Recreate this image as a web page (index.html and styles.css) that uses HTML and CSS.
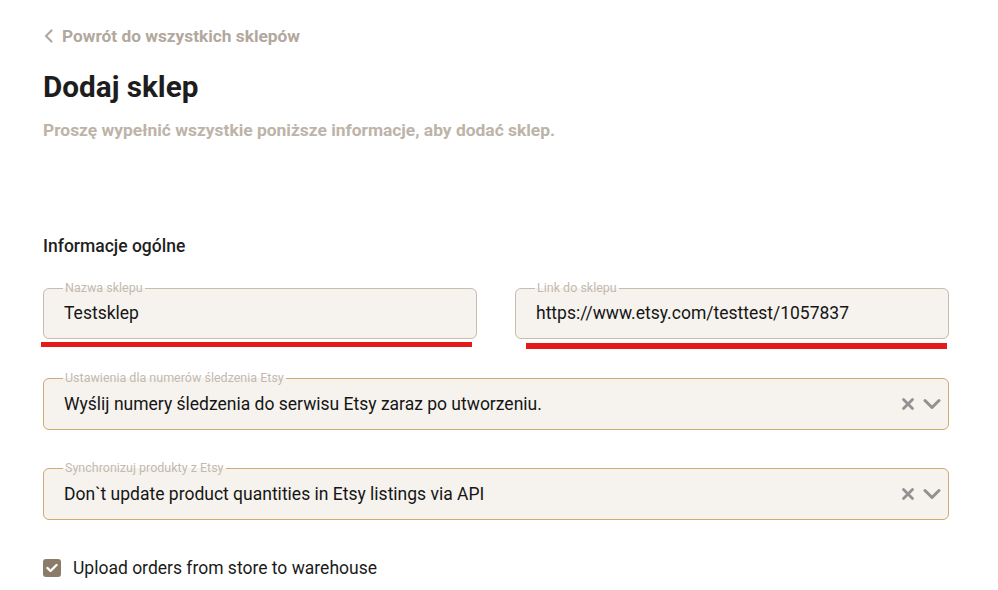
FILE: index.html
```html
<!DOCTYPE html>
<html lang="pl">
<head>
<meta charset="utf-8">
<title>Dodaj sklep</title>
<link rel="stylesheet" href="styles.css">
</head>
<body>
<main class="page">
  <a class="back" href="#">
    <svg class="back-icon" width="12" height="14" viewBox="0 0 12 14"><path d="M8.5 1.5 L3 7 L8.5 12.5" fill="none" stroke="currentColor" stroke-width="2.2" stroke-linecap="round" stroke-linejoin="round"/></svg>
    <span>Powrót do wszystkich sklepów</span>
  </a>
  <h1 class="title">Dodaj sklep</h1>
  <p class="subtitle">Proszę wypełnić wszystkie poniższe informacje, aby dodać sklep.</p>

  <h2 class="section">Informacje ogólne</h2>

  <div class="row">
    <div class="col">
      <fieldset class="field">
        <legend>Nazwa sklepu</legend>
        <div class="value">Testsklep</div>
      </fieldset>
      <div class="mark mark-1"></div>
    </div>
    <div class="col">
      <fieldset class="field">
        <legend>Link do sklepu</legend>
        <div class="value">https://www.etsy.com/testtest/1057837</div>
      </fieldset>
      <div class="mark mark-2"></div>
    </div>
  </div>

  <fieldset class="field select">
    <legend>Ustawienia dla numerów śledzenia Etsy</legend>
    <div class="value select-value">
      <span class="select-text">Wyślij numery śledzenia do serwisu Etsy zaraz po utworzeniu.</span>
      <span class="select-icons">
        <svg width="14" height="14" viewBox="0 0 14 14"><path d="M2.5 2.5 L11.5 11.5 M11.5 2.5 L2.5 11.5" stroke="currentColor" stroke-width="2.8" stroke-linecap="round"/></svg>
        <svg width="18" height="14" viewBox="0 0 18 14"><path d="M2 3.5 L9 10.5 L16 3.5" fill="none" stroke="currentColor" stroke-width="3" stroke-linecap="round" stroke-linejoin="round"/></svg>
      </span>
    </div>
  </fieldset>

  <fieldset class="field select">
    <legend>Synchronizuj produkty z Etsy</legend>
    <div class="value select-value">
      <span class="select-text">Don`t update product quantities in Etsy listings via API</span>
      <span class="select-icons">
        <svg width="14" height="14" viewBox="0 0 14 14"><path d="M2.5 2.5 L11.5 11.5 M11.5 2.5 L2.5 11.5" stroke="currentColor" stroke-width="2.8" stroke-linecap="round"/></svg>
        <svg width="18" height="14" viewBox="0 0 18 14"><path d="M2 3.5 L9 10.5 L16 3.5" fill="none" stroke="currentColor" stroke-width="3" stroke-linecap="round" stroke-linejoin="round"/></svg>
      </span>
    </div>
  </fieldset>

  <label class="check">
    <span class="box">
      <svg width="12" height="10" viewBox="0 0 12 10"><path d="M1.5 5 L4.5 8 L10.5 2" fill="none" stroke="#fff" stroke-width="2.4" stroke-linecap="round" stroke-linejoin="round"/></svg>
    </span>
    <span class="check-label">Upload orders from store to warehouse</span>
  </label>
</main>
</body>
</html>
```

FILE: styles.css
```css
* { box-sizing: border-box; }
html, body { margin: 0; padding: 0; background: #fff; }
body {
  font-family: Roboto, "Liberation Sans", Arial, sans-serif;
  color: #1b1b1b;
}
.page {
  width: 906px;
  margin-left: 43px;
  padding-top: 26px;
}
.back {
  display: flex;
  align-items: center;
  gap: 7px;
  height: 20px;
  color: #b2a89e;
  text-decoration: none;
  font-size: 17.3px;
  font-weight: 700;
  line-height: 20px;
}
.back-icon { display: block; }
.title {
  margin: 23px 0 0;
  font-size: 29.7px;
  font-weight: 700;
  line-height: 36px;
  color: #1d1d1d;
}
.subtitle {
  margin: 15px 0 0;
  font-size: 17.4px;
  font-weight: 700;
  line-height: 20px;
  color: #bdb3a8;
}
.section {
  margin: 96px 0 0;
  font-size: 17.5px;
  font-weight: 500;
  line-height: 20px;
  color: #1f1f1f;
}
.row {
  display: flex;
  gap: 38px;
  margin-top: 25px;
}
.col { flex: 1; }
.field {
  margin: 0;
  padding: 0 19px;
  border: 1px solid #c7bcae;
  border-radius: 6px;
  background: #f6f3ee;
  min-width: 0;
}
.field legend {
  padding: 0 2px;
  font-size: 12.5px;
  line-height: 14px;
  color: #c3b9ae;
}
.value {
  height: 43px;
  line-height: 36px;
  font-size: 17.5px;
  color: #151515;
  margin-left: 1px;
}
.mark {
  height: 5px;
  background: #e31b1b;
}
.mark-1 { margin: 3px 5px 0 -2px; }
.mark-2 { margin: 4px 2px 0 11px; height: 6px; }
.select {
  border-color: #d2aa73;
  margin-top: 22px;
}
.select + .select { margin-top: 31px; }
.select-value {
  display: flex;
  align-items: center;
  justify-content: space-between;
  height: 44px;
  line-height: 38px;
  padding-bottom: 6px;
  margin-right: -12px;
}
.select-icons {
  display: flex;
  align-items: center;
  gap: 8px;
  color: #919191;
}
.select-icons svg { display: block; }
.check {
  display: flex;
  align-items: center;
  gap: 12px;
  margin-top: 38px;
  font-size: 17.5px;
  line-height: 20px;
}
.box {
  width: 18px;
  height: 18px;
  border-radius: 3px;
  background: #8b7b67;
  display: flex;
  align-items: center;
  justify-content: center;
}
.check-label { color: #1b1b1b; }
```
